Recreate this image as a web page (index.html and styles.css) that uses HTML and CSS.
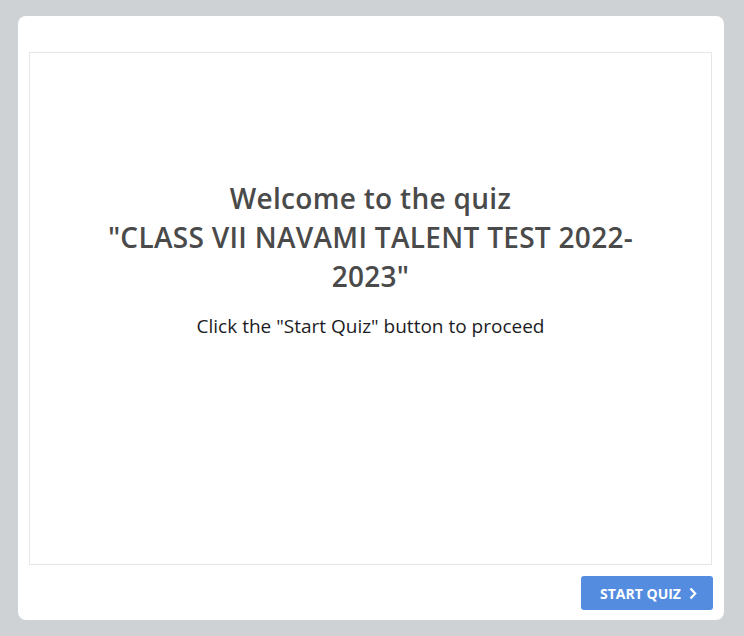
FILE: index.html
```html
<!DOCTYPE html>
<html lang="en">
<head>
<meta charset="utf-8">
<title>Quiz</title>
<link rel="stylesheet" href="styles.css">
</head>
<body>
<div class="card">
  <div class="stage">
    <h1 class="title">Welcome to the quiz<br>"CLASS VII NAVAMI TALENT TEST 2022-2023"</h1>
    <p class="hint">Click the "Start Quiz" button to proceed</p>
  </div>
  <div class="footer">
    <button class="start">START QUIZ
      <svg class="chev" width="8" height="13" viewBox="0 0 8 13"><path d="M1.5 1.5 L6.2 6.5 L1.5 11.5" fill="none" stroke="#fff" stroke-width="2.2"/></svg>
    </button>
  </div>
</div>
</body>
</html>
```
FILE: styles.css
```css
html, body {
  margin: 0;
  padding: 0;
  background: #cfd2d5;
  font-family: "Open Sans", "Liberation Sans", sans-serif;
}
body {
  padding: 16px 20px 16px 18px;
  height: 636px;
  box-sizing: border-box;
}
.card {
  background: #fff;
  border-radius: 8px;
  height: 604px;
  box-sizing: border-box;
  padding: 36px 12px 10px 11px;
  display: flex;
  flex-direction: column;
}
.stage {
  border: 1px solid #e6e6e6;
  height: 514px;
  box-sizing: border-box;
  display: flex;
  flex-direction: column;
  align-items: center;
  padding-top: 126px;
}
.title {
  margin: 0;
  width: 560px;
  text-align: center;
  font-size: 28px;
  font-weight: 600;
  line-height: 39px;
  letter-spacing: 0.3px;
  color: #4a4a4a;
}
.hint {
  margin: 17px 0 0;
  font-size: 19px;
  line-height: 26px;
  color: #1c1c24;
}
.footer {
  display: flex;
  justify-content: flex-end;
  padding-top: 11px;
}
.start {
  width: 132px;
  height: 34px;
  background: #548ce0;
  border: none;
  border-radius: 3px;
  color: #fff;
  font-family: "Open Sans", "Liberation Sans", sans-serif;
  font-weight: 700;
  font-size: 14px;
  display: flex;
  align-items: center;
  justify-content: center;
  gap: 8px;
  padding: 0 0 0 3px;
  margin-right: -1px;
}
.chev {
  display: block;
}
```
